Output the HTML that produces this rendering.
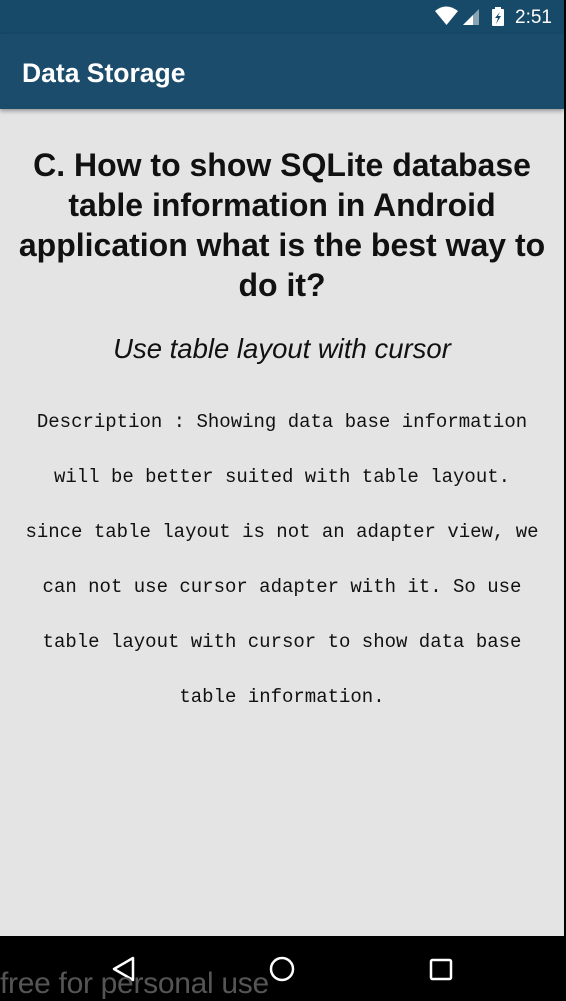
<!DOCTYPE html>
<html><head><meta charset="utf-8"><style>
*{margin:0;padding:0;box-sizing:border-box}
body{width:566px;height:998px;overflow:hidden;background:#000;position:relative;font-family:"Liberation Sans",sans-serif}
.sb{position:absolute;left:0;top:0;width:564px;height:34px;background:#174a69}
.ab{position:absolute;left:0;top:34px;width:564px;height:75px;background:#1b4c6b;box-shadow:0 2px 4px rgba(0,0,0,.35);z-index:2}
.ab span{position:absolute;left:22px;top:24px;color:#fff;font-size:26.5px;font-weight:bold}
.content{position:absolute;left:0;top:109px;width:564px;height:827px;background:#e4e4e4}
h1{position:absolute;left:0;width:564px;top:145px;text-align:center;font-size:32px;line-height:40px;font-weight:bold;color:#111}
.sub{position:absolute;left:0;width:564px;top:333px;text-align:center;font-size:27.5px;font-style:italic;color:#111}
.desc{position:absolute;left:0;width:564px;top:395px;text-align:center;font-family:"Liberation Mono",monospace;font-size:19px;line-height:55px;color:#111}
.time{position:absolute;left:515px;top:7px;color:#fff;font-size:19px}
.wm{position:absolute;left:0;top:967px;color:#555;font-size:30px;letter-spacing:-.3px}
</style></head><body>
<div class="sb">
<svg style="position:absolute;left:434px;top:5px" width="80" height="24">
<path d="M1 6 Q12 -3 24 6 L12.5 20 Z" fill="#fff"/>
<path d="M45 4 L45 20 L29 20 Z" fill="#8aa4b4"/><path d="M39 10 L39 20 L29 20 Z" fill="#fff"/>
<rect x="58" y="4" width="12" height="17" rx="1" fill="#fff"/><rect x="61" y="2" width="6" height="3" fill="#fff"/>
<path d="M66 7 L61 13 L64 13 L62 19 L67 11 L64 11 Z" fill="#174a69"/>
</svg>
<div class="time">2:51</div>
</div>
<div class="ab"><span>Data Storage</span></div>
<div class="content"></div>
<h1>C. How to show SQLite database<br>table information in Android<br>application what is the best way to<br>do it?</h1>
<div class="sub">Use table layout with cursor</div>
<div class="desc">Description : Showing data base information<br>will be better suited with table layout.<br>since table layout is not an adapter view, we<br>can not use cursor adapter with it. So use<br>table layout with cursor to show data base<br>table information.</div>
<svg style="position:absolute;left:0;top:936px" width="566" height="62">
<path d="M133 22 L114 33 L133 44 Z" fill="none" stroke="#fff" stroke-width="2.5" stroke-linejoin="round"/>
<circle cx="282" cy="33" r="11" fill="none" stroke="#fff" stroke-width="2.5"/>
<rect x="431" y="24" width="20" height="19" rx="1.5" fill="none" stroke="#fff" stroke-width="2.5"/>
</svg>
<div class="wm">free for personal use</div>
</body></html>
